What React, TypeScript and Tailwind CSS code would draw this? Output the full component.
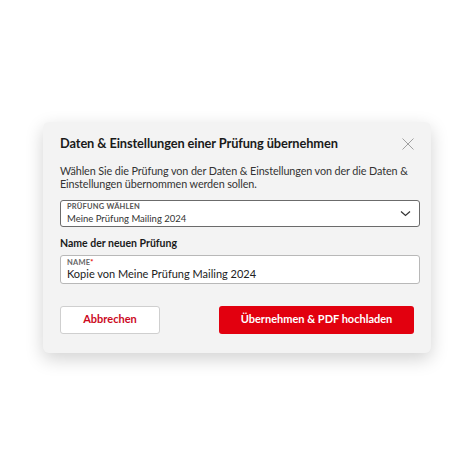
import React from "react";

export default function App() {
  return (
    <div className="w-[474px] h-[474px] bg-white flex items-center justify-center" style={{ fontFamily: "Lato, 'Noto Sans', sans-serif" }}>
      <div className="w-[388px] h-[231px] bg-[#f3f3f3] rounded-[6px] shadow-[0_6px_18px_rgba(0,0,0,0.18)] pl-[17px] pr-[11px] pt-[13px] flex flex-col">
        <div className="flex items-center justify-between h-[18px]">
          <h1 className="text-[12.8px] font-bold text-[#1a1a1a] tracking-[-0.1px]">Daten &amp; Einstellungen einer Prüfung übernehmen</h1>
          <svg width="14" height="14" viewBox="0 0 14 14" className="mr-[5px]">
            <path d="M1.5 1.5 L12.5 12.5 M12.5 1.5 L1.5 12.5" stroke="#a0a0a0" strokeWidth="1" fill="none" />
          </svg>
        </div>
        <p className="mt-[11px] text-[10.8px] leading-[13px] text-[#333] tracking-[-0.1px]">
          Wählen Sie die Prüfung von der Daten &amp; Einstellungen von der die Daten &amp; Einstellungen übernommen werden sollen.
        </p>
        <div className="mt-[10px] h-[27px] border border-[#6b6b6b] rounded-[3px] bg-white flex items-center justify-between pl-[6px] pr-[8px]">
          <div className="flex flex-col leading-none">
            <span className="text-[7.5px] font-bold text-[#555] tracking-[0.2px]">PRÜFUNG WÄHLEN</span>
            <span className="text-[9.5px] text-[#333] mt-[3px]">Meine Prüfung Mailing 2024</span>
          </div>
          <svg width="11" height="7" viewBox="0 0 11 7">
            <path d="M1 1.5 L5.5 5.5 L10 1.5" stroke="#333" strokeWidth="1.2" fill="none" />
          </svg>
        </div>
        <div className="mt-[9px] text-[10.5px] font-bold text-[#1a1a1a] leading-[14px]">Name der neuen Prüfung</div>
        <div className="mt-[5px] h-[29px] border border-[#b8b8b8] rounded-[3px] bg-white flex flex-col justify-center pl-[6px] leading-none">
          <span className="text-[7.5px] font-bold text-[#666] tracking-[0.2px]">NAME<span className="text-[#e60000]">*</span></span>
          <span className="text-[11px] text-[#222] mt-[2px]">Kopie von Meine Prüfung Mailing 2024</span>
        </div>
        <div className="mt-[22px] flex justify-between pr-[6px]">
          <button className="w-[100px] h-[28px] bg-white border border-[#cfcfcf] rounded-[3px] text-[11px] font-bold text-[#cc0a1e]">Abbrechen</button>
          <button className="w-[195px] h-[28px] bg-[#e2000f] rounded-[3px] text-[11px] font-bold text-white">Übernehmen &amp; PDF hochladen</button>
        </div>
      </div>
    </div>
  );
}
